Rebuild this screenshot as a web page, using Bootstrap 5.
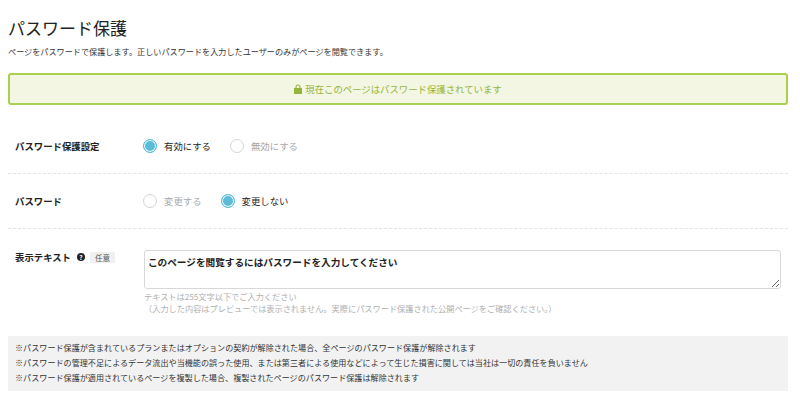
<!DOCTYPE html>
<html lang="ja">
<head>
<meta charset="utf-8">
<title>パスワード保護</title>
<link href="https://cdn.jsdelivr.net/npm/bootstrap@5.3.0/dist/css/bootstrap.min.css" rel="stylesheet">
<style>
html,body{height:100%;background:#fff;overflow:hidden}
body{font-family:"Noto Sans CJK JP","Noto Sans",sans-serif;color:#222;font-size:9.4px}
.pg{padding:19px 12px 0 8px}
.pg-title{font-size:17px;font-weight:400;line-height:18px;margin:0 0 10px;color:#222}
.pg-desc{font-size:8.15px;line-height:10px;margin:0 0 16px;color:#333}
.lock-banner{height:32px;border:2px solid #a9d04e;border-radius:3px;background:#f3f6e3;color:#94b53c;font-size:9.4px;margin-bottom:22px}
.lock-banner svg{width:8px;height:10px;margin-right:3px}
.opt-row{padding:0 7px;border-bottom:1px dashed #e4e4e4}
.r-1{height:47px;padding-top:12px}
.r-2{height:55px}
.r-3{border:0;padding-top:21px}
.opt-label{width:128px;font-weight:700;font-size:9.4px;line-height:14px;color:#222;flex:none}
.radio-set{gap:19px}
.radio-item{margin:0;padding:0;min-height:0;gap:7px;font-size:9.4px;color:#222}
.radio-item.off{color:#a8a8a8}
.radio-item .form-check-input{float:none;margin:0;width:14px;height:14px;border:1px solid #d4d4d4;background-image:none;box-shadow:none}
.radio-item .form-check-input:checked{background-color:#5abcd9;border-color:#5abcd9;box-shadow:inset 0 0 0 1px #fff;background-image:none}
.help-dot{width:8px;height:8px;border-radius:50%;background:#222;color:#fff;font-size:6.5px;font-weight:700;line-height:8px;text-align:center;margin-left:6px}
.opt-tag{background:#f0f0f0;color:#555;font-size:7.5px;font-weight:400;line-height:11px;padding:0 5px;margin-left:5px;border-radius:1px}
.text-wrap{flex:1;min-width:0;margin-left:1px}
.msg-box{display:block;width:637px;height:39px;border:1px solid #d8d8d8;border-radius:3px;padding:3px 3px;font-size:9.65px;font-weight:700;line-height:16px;color:#222;font-family:inherit;box-shadow:none;min-height:0;background:#fff;resize:vertical}
.hint{font-size:8.2px;line-height:11px;color:#b0b0b0;margin:2px 0 0}
.hint + .hint{margin-top:1px}
.note-box{background:#f2f2f2;padding:4px 7px 6px;font-size:8.1px;line-height:15px;color:#333;margin-top:22px;height:55px}
</style>
</head>
<body>
<main class="pg">
  <h1 class="pg-title">パスワード保護</h1>
  <p class="pg-desc">ページをパスワードで保護します。正しいパスワードを入力したユーザーのみがページを閲覧できます。</p>
  <div class="lock-banner d-flex align-items-center justify-content-center">
    <svg viewBox="0 0 8 10" aria-hidden="true"><path d="M1.5 4V3a2.5 2.5 0 0 1 5 0v1H8v6H0V4zM2.6 4h2.8V3a1.4 1.4 0 0 0-2.8 0z" fill="#94b53c" fill-rule="evenodd"/></svg>
    <span>現在このページはパスワード保護されています</span>
  </div>

  <div class="opt-row r-1 d-flex align-items-start">
    <div class="opt-label">パスワード保護設定</div>
    <div class="radio-set d-flex">
      <label class="radio-item form-check d-flex align-items-center"><input class="form-check-input" type="radio" name="a" checked><span>有効にする</span></label>
      <label class="radio-item off form-check d-flex align-items-center"><input class="form-check-input" type="radio" name="a"><span>無効にする</span></label>
    </div>
  </div>
  <div class="opt-row r-2 d-flex align-items-center">
    <div class="opt-label">パスワード</div>
    <div class="radio-set d-flex">
      <label class="radio-item off form-check d-flex align-items-center"><input class="form-check-input" type="radio" name="b"><span>変更する</span></label>
      <label class="radio-item form-check d-flex align-items-center"><input class="form-check-input" type="radio" name="b" checked><span>変更しない</span></label>
    </div>
  </div>
  <div class="opt-row r-3 d-flex align-items-start">
    <div class="opt-label d-flex align-items-center"><span>表示テキスト</span><span class="help-dot">?</span><span class="opt-tag">任意</span></div>
    <div class="text-wrap">
      <textarea class="msg-box form-control">このページを閲覧するにはパスワードを入力してください</textarea>
      <p class="hint">テキストは255文字以下でご入力ください</p>
      <p class="hint">（入力した内容はプレビューでは表示されません。実際にパスワード保護された公開ページをご確認ください。）</p>
    </div>
  </div>

  <div class="note-box">
    <div>※パスワード保護が含まれているプランまたはオプションの契約が解除された場合、全ページのパスワード保護が解除されます</div>
    <div>※パスワードの管理不足によるデータ流出や当機能の誤った使用、または第三者による使用などによって生じた損害に関しては当社は一切の責任を負いません</div>
    <div>※パスワード保護が適用されているページを複製した場合、複製されたページのパスワード保護は解除されます</div>
  </div>
</main>
<script src="https://cdn.jsdelivr.net/npm/bootstrap@5.3.0/dist/js/bootstrap.bundle.min.js"></script>
</body>
</html>
